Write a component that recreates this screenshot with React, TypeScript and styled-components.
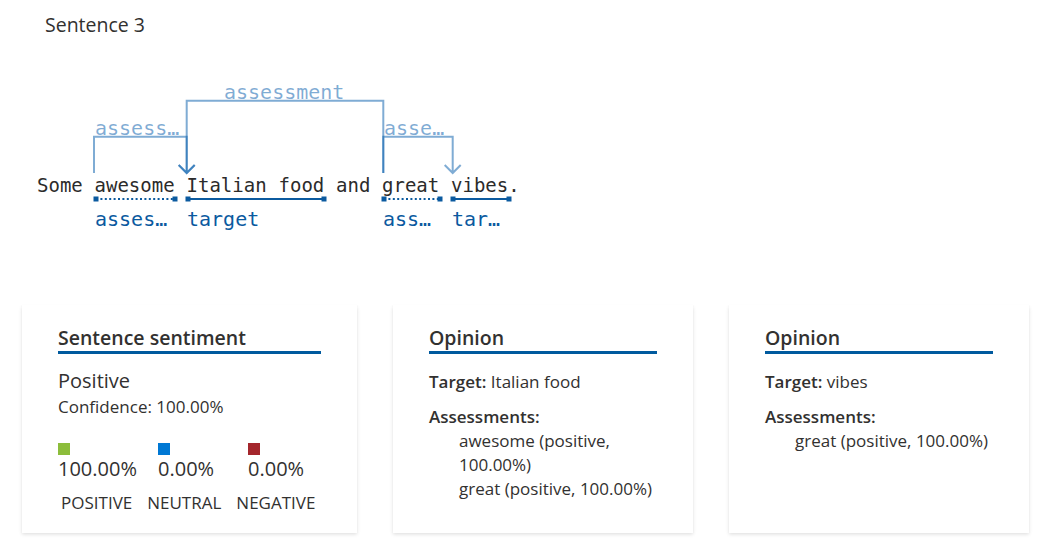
import React from 'react'
import styled, { createGlobalStyle } from 'styled-components'

const GlobalStyle = createGlobalStyle`
  html, body {
    margin: 0;
    padding: 0;
    background: #fff;
  }
  body {
    font-family: 'Open Sans', 'Noto Sans', sans-serif;
    color: #323130;
  }
`

const Page = styled.main`
  padding-top: 12px;
  width: 1051px;
  height: 544px;
  box-sizing: border-box;
  overflow: hidden;
`

const Title = styled.h2`
  margin: 0 0 0 45px;
  font-size: 19.5px;
  font-weight: 400;
  line-height: 26px;
  color: #323130;
`

const Diagram = styled.svg`
  display: block;
  margin-top: 38px;
`

const CardRow = styled.div`
  display: flex;
  gap: 36px;
  margin: 59px 0 0 22px;
`

const Card = styled.section<{ $width: number }>`
  box-sizing: border-box;
  width: ${(p) => p.$width}px;
  height: 228px;
  padding: 20px 36px;
  background: #fff;
  box-shadow: 0 1.6px 3.6px rgba(0, 0, 0, 0.13), 0 0.3px 0.9px rgba(0, 0, 0, 0.11);
`

const CardHeading = styled.h3`
  margin: 0;
  font-size: 19.5px;
  font-weight: 600;
  line-height: 26px;
  color: #323130;
  border-bottom: 3px solid #005a9e;
`

const Label = styled.div`
  margin-top: 14px;
  font-size: 20px;
  line-height: 26px;
`

const Confidence = styled.div`
  margin-top: 2px;
  font-size: 17px;
  line-height: 22px;
`

const Scores = styled.div`
  display: grid;
  grid-template-columns: 100px 90px auto;
  margin-top: 25px;
`

const Swatch = styled.span<{ $color: string }>`
  display: block;
  width: 12px;
  height: 12px;
  background: ${(p) => p.$color};
`

const Percent = styled.div`
  margin-top: 1px;
  font-size: 20px;
  line-height: 26px;
`

const ScoreNames = styled.div`
  display: flex;
  gap: 15px;
  margin: 10px 0 0 3px;
  font-size: 17px;
  line-height: 22px;
  text-transform: uppercase;
`

const Field = styled.div<{ $gap?: number }>`
  margin-top: ${(p) => p.$gap ?? 0}px;
  font-size: 17px;
  line-height: 24px;
  strong {
    font-weight: 600;
  }
`

const Assessments = styled.ul`
  margin: 0;
  padding: 0 0 0 30px;
  list-style: none;
  font-size: 17px;
  line-height: 24px;
`

type Opinion = {
  target: string
  assessments: string[]
}

const opinions: Opinion[] = [
  { target: 'Italian food', assessments: ['awesome (positive, 100.00%)', 'great (positive, 100.00%)'] },
  { target: 'vibes', assessments: ['great (positive, 100.00%)'] },
]

const scores = [
  { name: 'Positive', value: '100.00%', color: '#8cbd3b' },
  { name: 'Neutral', value: '0.00%', color: '#0078d4' },
  { name: 'Negative', value: '0.00%', color: '#a4262c' },
]

const CHAR = 11.5
const X0 = 37
const words = ['Some', 'awesome', 'Italian', 'food', 'and', 'great', 'vibes.']

const wordX = (() => {
  let i = 0
  return words.map((w) => {
    const x = X0 + i * CHAR
    i += w.length + 1
    return x
  })
})()

const mono = "'DejaVu Sans Mono', 'Liberation Mono', monospace"
const ARC = 'rgba(0, 90, 170, 0.5)'
const SPAN = '#0b5a9f'

type Span = { x1: number; x2: number; dotted?: boolean; label: string }

const spans: Span[] = [
  { x1: 96, x2: 175, dotted: true, label: 'asses…' },
  { x1: 188, x2: 324, label: 'target' },
  { x1: 384, x2: 440, dotted: true, label: 'ass…' },
  { x1: 453, x2: 509, label: 'tar…' },
]

type Arc = { from: number; to: number; top: number; label: string; labelX: number }

const arcs: Arc[] = [
  { from: 94, to: 186.7, top: 60.7, label: 'assess…', labelX: 95 },
  { from: 383.3, to: 186.7, top: 24.7, label: 'assessment', labelX: 224 },
  { from: 383.3, to: 452.7, top: 60.7, label: 'asse…', labelX: 384 },
]

function SentenceDiagram() {
  const bottom = 97
  return (
    <Diagram width={560} height={170}>
      {arcs.map((a) => (
        <g key={a.label}>
          <path
            d={`M${a.from} ${bottom} V${a.top} H${a.to} V${bottom} M${a.to - 8} ${bottom - 8} L${a.to} ${bottom} L${a.to + 8} ${bottom - 8}`}
            fill="none"
            stroke={ARC}
            strokeWidth={2}
          />
          <text x={a.labelX} y={a.top - 2} fill={ARC} fontFamily={mono} fontSize={20}>
            {a.label}
          </text>
        </g>
      ))}
      {words.map((w, i) => (
        <text key={w} x={wordX[i]} y={115.7} fill="#2b2b2b" fontFamily={mono} fontSize={19}>
          {w}
        </text>
      ))}
      {spans.map((s) => (
        <g key={s.label + s.x1}>
          <line
            x1={s.x1}
            x2={s.x2}
            y1={123}
            y2={123}
            stroke={SPAN}
            strokeWidth={2}
            strokeDasharray={s.dotted ? '2 2.4' : undefined}
          />
          <rect x={s.x1 - 2.5} y={120.5} width={5} height={5} fill={SPAN} />
          <rect x={s.x2 - 2.5} y={120.5} width={5} height={5} fill={SPAN} />
          <text x={s.x1 - 1} y={150} fill={SPAN} fontFamily={mono} fontSize={20}>
            {s.label}
          </text>
        </g>
      ))}
    </Diagram>
  )
}

export default function App() {
  return (
    <Page>
      <GlobalStyle />
      <Title>Sentence 3</Title>
      <SentenceDiagram />
      <CardRow>
        <Card $width={335}>
          <CardHeading>Sentence sentiment</CardHeading>
          <Label>Positive</Label>
          <Confidence>Confidence: 100.00%</Confidence>
          <Scores>
            {scores.map((s) => (
              <div key={s.name}>
                <Swatch $color={s.color} />
                <Percent>{s.value}</Percent>
              </div>
            ))}
          </Scores>
          <ScoreNames>
            {scores.map((s) => (
              <span key={s.name}>{s.name}</span>
            ))}
          </ScoreNames>
        </Card>
        {opinions.map((o) => (
          <Card $width={300} key={o.target}>
            <CardHeading>Opinion</CardHeading>
            <Field $gap={16}>
              <strong>Target:</strong> {o.target}
            </Field>
            <Field $gap={11}>
              <strong>Assessments:</strong>
            </Field>
            <Assessments>
              {o.assessments.map((a) => (
                <li key={a}>{a}</li>
              ))}
            </Assessments>
          </Card>
        ))}
      </CardRow>
    </Page>
  )
}
